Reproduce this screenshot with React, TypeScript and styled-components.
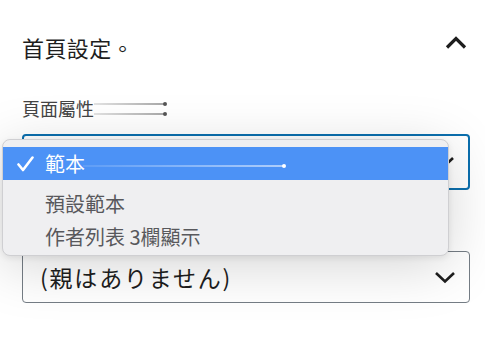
import styled, { createGlobalStyle } from "styled-components";

const GlobalStyle = createGlobalStyle`
	html, body {
		margin: 0;
		background: #fff;
	}
	body {
		font-family: "Noto Sans CJK TC", "Noto Sans", sans-serif;
		color: #1e1e1e;
	}
`;

const Check = () => (
	<svg width="17" height="16" viewBox="0 0 17 16" fill="none">
		<path d="M1.5 8.5 L6 14 L15.5 1.5" stroke="#fff" strokeWidth="2.6" strokeLinecap="round" strokeLinejoin="round" />
	</svg>
);

const Chevron = ({ up = false }: { up?: boolean }) => (
	<svg width="22" height="13" viewBox="0 0 22 13" fill="none">
		<path
			d={up ? "M2 11.5 L11 2.5 L20 11.5" : "M2 2 L11 10.5 L20 2"}
			stroke="#1e1e1e"
			strokeWidth={up ? 3.2 : 2.6}
		/>
	</svg>
);

const options = ["預設範本", "作者列表 3欄顯示"];

const App = () => {
	return (
		<>
			<GlobalStyle />
			<Panel>
				<Header>
					<Title>首頁設定。</Title>
					<Chevron up />
				</Header>

				<Label>
					頁面屬性
					<Streak $w={71} $top={-5} $dark />
					<Streak $w={71} $top={5} $dark />
				</Label>

				<Field>
					<SelectBox $focused>
						<span />
						<Chevron />
					</SelectBox>

					<Menu>
						<Selected>
							<CheckSlot>
								<Check />
							</CheckSlot>
							<ItemText>
								範本
								<Streak $w={201} $top={1} />
							</ItemText>
						</Selected>
						<Spacer />
						{options.map((o) => (
							<Item key={o}>
								<ItemText>{o}</ItemText>
							</Item>
						))}
					</Menu>
				</Field>

				<SelectBox $parent>
					<ParentText>(親はありません)</ParentText>
					<Chevron />
				</SelectBox>
			</Panel>
		</>
	);
};

export default App;

const Panel = styled.div`
	width: 485px;
	height: 339px;
	box-sizing: border-box;
	padding: 0 15px 0 22px;
	display: flex;
	flex-direction: column;
	overflow: hidden;
`;

const Header = styled.div`
	height: 94px;
	display: flex;
	align-items: center;
	justify-content: space-between;
	padding-right: 3px;
	svg {
		margin-top: -10px;
	}
`;

const Title = styled.h2`
	margin: 0;
	font-size: 22px;
	font-weight: 400;
	letter-spacing: 0.4px;
	color: #1e1e1e;
`;

const Label = styled.div`
	position: relative;
	display: flex;
	align-items: center;
	height: 30px;
	margin-top: -1px;
	font-size: 18px;
	color: #444;
	line-height: 1;
`;

const Streak = styled.span<{ $w: number; $top: number; $dark?: boolean }>`
	position: absolute;
	left: ${(p) => (p.$dark ? "72px" : "38px")};
	top: calc(50% + ${(p) => p.$top}px);
	width: ${(p) => p.$w}px;
	height: 2px;
	background: ${(p) =>
		p.$dark
			? "linear-gradient(90deg, rgba(120,120,120,0.2), rgba(110,110,110,0.6))"
			: "linear-gradient(90deg, rgba(255,255,255,0.1), rgba(255,255,255,0.55))"};
	&::after {
		content: "";
		position: absolute;
		right: -2px;
		top: -1px;
		width: 4px;
		height: 4px;
		border-radius: 50%;
		background: ${(p) => (p.$dark ? "#555" : "#fff")};
	}
`;

const Field = styled.div`
	position: relative;
	margin-top: 11px;
`;

const SelectBox = styled.div<{ $focused?: boolean; $parent?: boolean }>`
	height: ${(p) => (p.$parent ? "52px" : "56px")};
	box-sizing: border-box;
	width: 448px;
	border-radius: 4px;
	border: ${(p) => (p.$focused ? "2.5px solid #0b6fae" : "1.5px solid #757d85")};
	background: #fff;
	display: flex;
	align-items: center;
	justify-content: space-between;
	padding: 0 13px 0 17px;
	margin-top: ${(p) => (p.$parent ? "61px" : "0")};
`;

const ParentText = styled.span`
	font-family: "Noto Sans CJK JP", "Noto Sans", sans-serif;
	font-size: 23px;
	color: #1e1e1e;
	letter-spacing: 1.8px;
`;

const Menu = styled.div`
	position: absolute;
	left: -20px;
	top: 5px;
	width: 447px;
	height: 117px;
	box-sizing: border-box;
	padding-top: 7px;
	background: #efeff1;
	border: 1px solid #cfcfd2;
	border-radius: 8px;
	box-shadow: 0 10px 55px rgba(0, 0, 0, 0.17), 0 2px 6px rgba(0, 0, 0, 0.08);
	overflow: hidden;
	z-index: 2;
`;

const Selected = styled.div`
	height: 33px;
	display: flex;
	align-items: center;
	background: #4c92f6;
	color: #fff;
`;

const CheckSlot = styled.span`
	width: 42px;
	display: flex;
	justify-content: center;
	svg {
		margin-left: 2px;
	}
`;

const Spacer = styled.div`
	height: 7px;
`;

const Item = styled.div`
	height: 33px;
	display: flex;
	align-items: center;
	padding-left: 42px;
	color: #58585c;
`;

const ItemText = styled.span`
	position: relative;
	font-size: 20px;
	line-height: 1;
`;
